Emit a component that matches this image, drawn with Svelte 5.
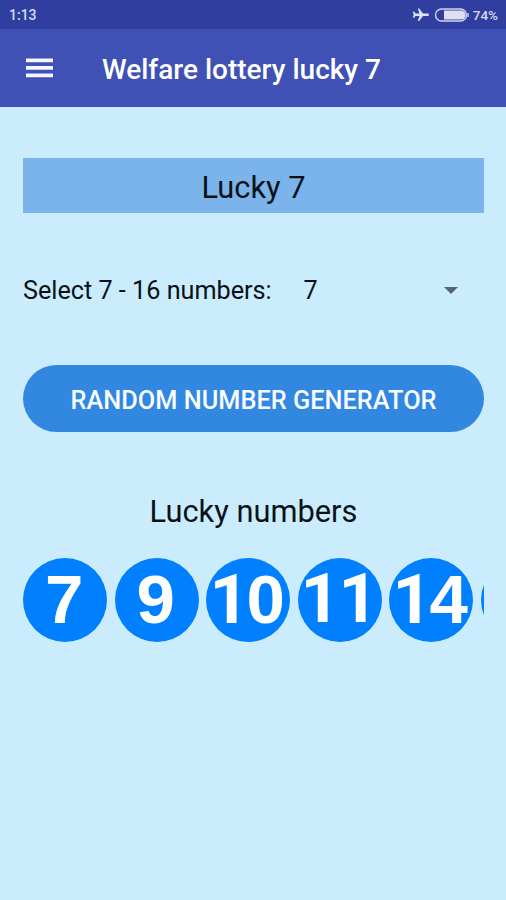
<script lang="ts">
	let count = $state(7);
	let numbers: (number | null)[] = $state([7, 9, 10, 11, 14, null, null]);

	function generate() {
		const picked = new Set<number>();
		while (picked.size < count) {
			picked.add(1 + Math.floor(Math.random() * 30));
		}
		numbers = [...picked].sort((a, b) => a - b);
	}

	function nextCount() {
		count = count === 16 ? 7 : count + 1;
	}
</script>

<div class="screen">
	<div class="status">
		<span class="time">1:13</span>
		<div class="indicators">
			<svg class="plane" width="18" height="16" viewBox="0 0 18 16">
				<path
					d="M17 7.7c0-.8-.7-1.2-1.5-1.2H11L7.2 1.5H5.8l1.7 5H3.6L2 4.6H.8l.9 3.1-.9 3.1H2l1.6-1.9h3.9l-1.7 5h1.4L11 8.9h4.5c.8 0 1.5-.4 1.5-1.2z"
				/>
			</svg>
			<svg class="battery" width="36" height="14" viewBox="0 0 36 14">
				<rect x="1.5" y="1" width="31" height="12" rx="6" />
				<path class="level" d="M10 2.5h17a4.5 4.5 0 0 1 0 9H10z" />
				<path class="cap" d="M34 5v4" />
			</svg>
			<span class="percent">74%</span>
		</div>
	</div>

	<header class="toolbar">
		<button class="menu" aria-label="Menu">
			<svg width="27" height="20" viewBox="0 0 27 20">
				<path d="M0 2.4h27M0 9.9h27M0 17.4h27" />
			</svg>
		</button>
		<h1>Welfare lottery lucky 7</h1>
	</header>

	<main>
		<div class="banner">Lucky 7</div>

		<div class="select-row">
			<span class="select-label">Select 7 - 16 numbers:</span>
			<button class="spinner" onclick={nextCount}>
				<span>{count}</span>
				<svg width="14" height="7" viewBox="0 0 14 7"><path d="M0 0h14L7 7z" /></svg>
			</button>
		</div>

		<button class="generate" onclick={generate}>RANDOM NUMBER GENERATOR</button>

		<h2>Lucky numbers</h2>

		<div class="balls">
			{#each numbers as number}
				<div class="ball" class:raised={number === 11}>
					{#each String(number ?? '') as digit}
						<span class="digit" class:one={digit === '1'}>{digit}</span>
					{/each}
				</div>
			{/each}
		</div>
	</main>
</div>

<style>
	:global(body) {
		margin: 0;
	}

	.screen {
		width: 506px;
		height: 900px;
		overflow: hidden;
		background: #cbecfd;
		color: #0a1216;
		font-family: Roboto, sans-serif;
	}

	button {
		border: 0;
		padding: 0;
		background: none;
		color: inherit;
		font: inherit;
		cursor: pointer;
	}

	svg {
		display: block;
	}

	.status {
		display: flex;
		align-items: center;
		justify-content: space-between;
		height: 29px;
		box-sizing: border-box;
		padding: 1px 8px 0 9px;
		background: #303f9f;
		color: #d5daf5;
		font-size: 14px;
		font-weight: 500;
	}

	.percent {
		font-size: 13.5px;
	}

	.indicators {
		display: flex;
		align-items: center;
	}

	.plane {
		fill: #dfe3f8;
		margin-right: 4px;
	}

	.battery {
		margin-right: 3px;
		fill: none;
		stroke: #d0d5ee;
		stroke-width: 1.4;
	}

	.battery .level {
		fill: #dde0f0;
		stroke: none;
	}

	.toolbar {
		display: flex;
		align-items: center;
		height: 78px;
		box-sizing: border-box;
		padding-left: 26px;
		background: #3f51b5;
		color: #fff;
	}

	.menu {
		width: 27px;
		margin-right: 49px;
	}

	.menu svg {
		fill: none;
		stroke: #f4f6ff;
		stroke-width: 3.6;
	}

	h1 {
		margin: 3px 0 0;
		font-size: 28px;
		font-weight: 500;
		line-height: 36px;
		white-space: nowrap;
	}

	main {
		display: flex;
		flex-direction: column;
		padding: 51px 22px 0 23px;
	}

	.banner {
		height: 55px;
		background: #7bb3eb;
		font-size: 30.8px;
		line-height: 59px;
		text-align: center;
	}

	.select-row {
		display: flex;
		align-items: center;
		height: 50px;
		margin-top: 52px;
		font-size: 25.2px;
	}

	.select-label {
		width: 280.5px;
		white-space: nowrap;
	}

	.spinner {
		display: flex;
		flex: 1;
		align-items: center;
		justify-content: space-between;
		padding-right: 26.5px;
	}

	.spinner svg {
		fill: #54666f;
	}

	.generate {
		height: 67px;
		margin-top: 50px;
		padding-top: 3px;
		border-radius: 34px;
		background: #3287e0;
		color: #f8fcff;
		font-size: 25.35px;
		font-weight: 500;
		white-space: nowrap;
	}

	h2 {
		margin: 59px 0 0;
		font-size: 30.8px;
		font-weight: 400;
		line-height: 42px;
		text-align: center;
	}

	.balls {
		display: flex;
		gap: 7.5px;
		margin-top: 25px;
		overflow: hidden;
	}

	.ball {
		display: flex;
		flex: none;
		align-items: baseline;
		justify-content: center;
		width: 84px;
		height: 84px;
		box-sizing: border-box;
		padding-right: 2px;
		border-radius: 50%;
		background: #007fff;
		color: #fff;
		font-family: 'Liberation Sans', Arial, sans-serif;
		font-size: 69px;
		font-weight: 700;
		line-height: 84px;
	}

	.ball.raised {
		line-height: 82px;
	}

	.digit {
		width: 38px;
		text-align: center;
	}

	/* a plain 1 with no foot */
	.one {
		font-family: Roboto, sans-serif;
	}

	.one + .digit:not(.one) {
		margin-left: -1px;
	}
</style>
